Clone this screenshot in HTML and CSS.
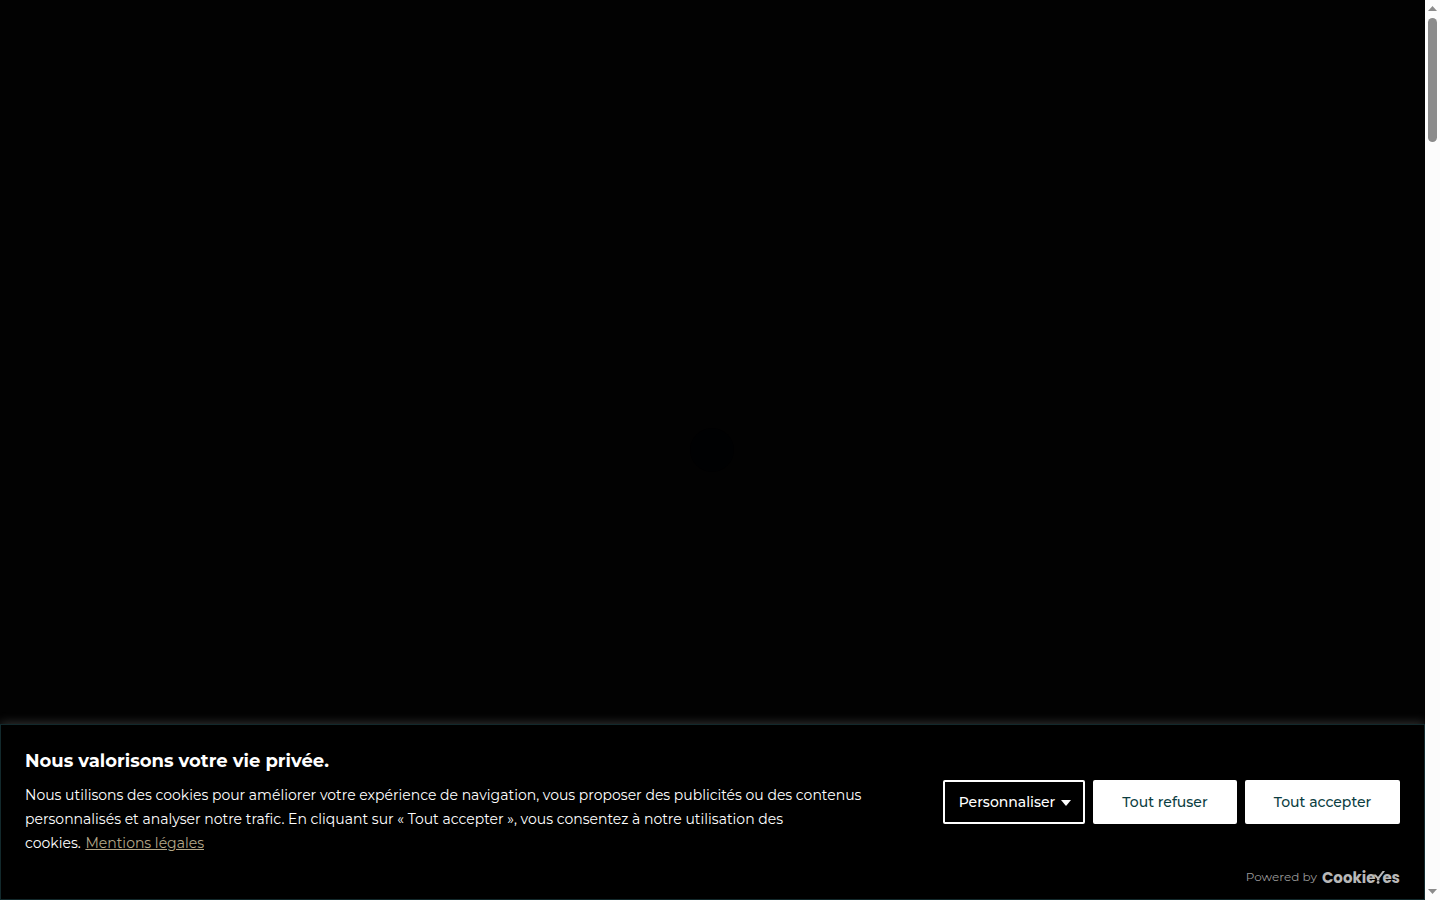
FILE: index.html
```html
<!DOCTYPE html>
<html lang="fr">
<head>
    <meta charset="UTF-8">
    <meta name="viewport" content="width=device-width, initial-scale=1.0">
    <title>Accueil</title>
    <link rel="stylesheet" href="styles.css">
</head>
<body>
    <div class="page">
        <main class="preloader">
            <div class="loader"></div>
        </main>

        <section class="consent-bar" aria-labelledby="consent-title">
            <div class="consent-notice">
                <h1 class="consent-title" id="consent-title">Nous valorisons votre vie privée.</h1>
                <div class="consent-group">
                    <p class="consent-text">
                        Nous utilisons des cookies pour améliorer votre expérience de navigation, vous proposer des publicités ou des contenus<br>
                        personnalisés et analyser notre trafic. En cliquant sur « Tout accepter », vous consentez à notre utilisation des<br>
                        cookies. <a class="policy-link" href="#">Mentions légales</a>
                    </p>
                    <div class="consent-buttons">
                        <button class="btn btn-customize" type="button">Personnaliser</button>
                        <button class="btn btn-reject" type="button">Tout refuser</button>
                        <button class="btn btn-accept" type="button">Tout accepter</button>
                    </div>
                </div>
            </div>
            <div class="powered-by">
                <span>Powered by</span>
                <a class="brand" href="#" aria-label="CookieYes">Cookie<svg class="brand-check" width="12" height="14" viewBox="0 0 12 14" aria-hidden="true"><path d="M0 3.4H2.8L5 6 9.6 0H12L6.4 7.6V9.4H3.9V7.6z" fill="currentColor"/><circle cx="5.1" cy="11.4" r="1.4" fill="currentColor"/></svg>es</a>
            </div>
        </section>
    </div>

    <div class="scrollbar" aria-hidden="true">
        <svg class="arrow" width="9" height="5" viewBox="0 0 9 5"><path d="M0 5 4.5 0 9 5z"/></svg>
        <div class="track"><div class="thumb"></div></div>
        <svg class="arrow" width="9" height="5" viewBox="0 0 9 5"><path d="M0 0 4.5 5 9 0z"/></svg>
    </div>
</body>
</html>
```
FILE: styles.css
```css
* {
    box-sizing: border-box;
}

body {
    margin: 0;
    display: flex;
    min-height: 100vh;
    background-color: #020202;
    color: #fff;
    font-family: Montserrat, Inter, sans-serif;
}

.page {
    flex: 1;
    min-width: 0;
    display: flex;
    flex-direction: column;
}

/* loader is centred on the whole window, behind the consent bar */
.preloader {
    flex: 1;
    position: relative;
}

.loader {
    position: fixed;
    top: 50%;
    left: calc(50% - 8px);
    width: 44px;
    height: 44px;
    border-radius: 50%;
    background-color: #000102;
    transform: translate(-50%, -50%);
}

.consent-bar {
    position: relative;
    background-color: #000;
    border: 1px solid #12292c;
    box-shadow: 0 -1px 10px rgba(172, 171, 171, 0.3);
}

.consent-notice {
    padding: 24px 24px 12px;
}

.consent-title {
    margin: 0 0 7px;
    font-size: 18px;
    line-height: 24px;
    font-weight: 700;
}

.consent-group {
    display: flex;
    justify-content: space-between;
    align-items: flex-start;
    gap: 32px;
}

.consent-text {
    margin: 3px 0 0;
    font-size: 14px;
    line-height: 24px;
}

.policy-link {
    margin-left: 1px;
    color: #b5a88a;
}

.consent-buttons {
    display: flex;
    flex-shrink: 0;
    gap: 8px;
}

.btn {
    height: 44px;
    border: 2px solid #fff;
    border-radius: 2px;
    background-color: #fff;
    color: #0c3e42;
    font-family: inherit;
    font-size: 14px;
    font-weight: 500;
    cursor: pointer;
}

.btn-customize {
    display: flex;
    align-items: center;
    justify-content: center;
    gap: 6px;
    width: 142px;
    padding: 0 0 0 2px;
    background-color: #000;
    color: #fff;
}

.btn-customize::after {
    content: "";
    margin-top: 2px;
    border: 5px solid transparent;
    border-top: 6px solid #fff;
    border-bottom: 0;
}

.btn-reject {
    width: 144px;
}

.btn-accept {
    width: 155px;
}

.powered-by {
    display: flex;
    justify-content: flex-end;
    align-items: center;
    gap: 5px;
    padding: 0 24px 12px;
    color: #9a9a9a;
    font-size: 12px;
    line-height: 20px;
}

.brand {
    display: flex;
    align-items: center;
    padding-top: 2px;
    color: #b8b8b8;
    font-family: Poppins, Inter, sans-serif;
    font-size: 15px;
    line-height: 18px;
    font-weight: 700;
    text-decoration: none;
}

.brand-check {
    margin: 0 -3px 0 -2px;
}

.scrollbar {
    position: relative;
    width: 15px;
    display: flex;
    flex-direction: column;
    align-items: center;
    padding: 6px 0;
    background-color: #fcfcfc;
}

.arrow {
    fill: #8b8b8b;
}

.track {
    flex: 1;
    width: 9px;
    padding: 7px 0;
}

.thumb {
    height: 124px;
    border-radius: 5px;
    background-color: #8b8b8b;
}
```
